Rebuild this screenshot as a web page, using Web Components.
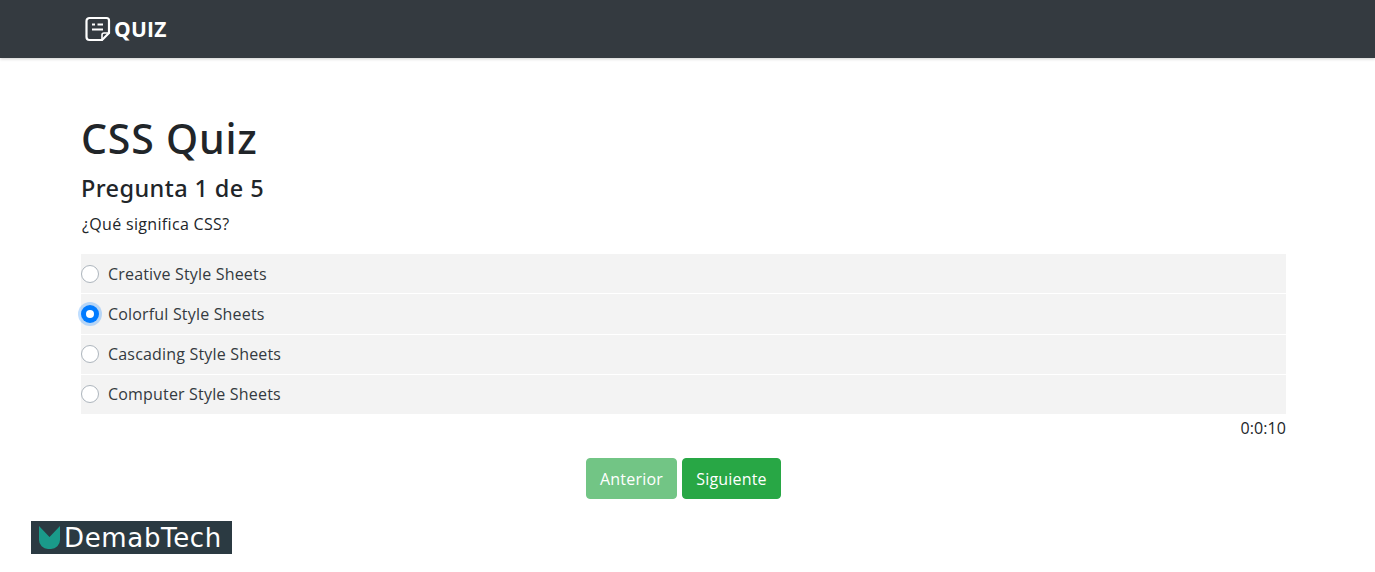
<!DOCTYPE html>
<html lang="es"><head><meta charset="utf-8"><title>Quiz</title>
<style>
html,body{margin:0;padding:0;background:#fff;height:572px;overflow:hidden}
body{font-family:"Open Sans","Noto Sans",sans-serif;color:#212529}
</style></head><body>
<quiz-nav></quiz-nav>
<quiz-app>
  <quiz-option>Creative Style Sheets</quiz-option>
  <quiz-option checked>Colorful Style Sheets</quiz-option>
  <quiz-option>Cascading Style Sheets</quiz-option>
  <quiz-option>Computer Style Sheets</quiz-option>
</quiz-app>
<demab-logo></demab-logo>
<script>
function def(name,html){customElements.define(name,class extends HTMLElement{constructor(){super();this.attachShadow({mode:'open'}).innerHTML=html}})}
def('quiz-nav',`<style>
:host{display:flex;align-items:center;height:58px;background:#343a40;padding-left:85px;box-shadow:0 1px 3px rgba(0,0,0,.2);gap:3px;box-sizing:border-box;color:#fff}
svg{display:block}
b{font:700 21px/1 "Open Sans",sans-serif;letter-spacing:.2px}
</style>
<svg width="26" height="26" viewBox="0 0 26 26" fill="none" stroke="#fff" stroke-width="2.200" stroke-linejoin="round" stroke-linecap="round"><path d="M4.500 2h17a2.500 2.500 0 0 1 2.500 2.500v12.500l-7 7h-12.500a3 3 0 0 1-3-3v-16a3 3 0 0 1 3-3z"/><path d="M24 17h-5a2 2 0 0 0-2 2v5" stroke-width="1.600"/><path d="M7 8.500h3M12.500 8.500h5.500M7 13.500h11" stroke-width="2" stroke-linecap="butt"/></svg><b>QUIZ</b>`);
def('quiz-app',`<style>
:host{display:block;padding:57px 89px 0 81px;font-family:"Noto Sans","Open Sans",sans-serif}
h1{margin:0;font-size:41px;line-height:47px;font-weight:500;letter-spacing:.8px;color:#212529}
h2{margin:12px 0 0;font-size:23.500px;line-height:29px;font-weight:500;letter-spacing:.4px;color:#212529}
p{margin:9px 0 0;padding-left:1px;font:16px/24px "Open Sans",sans-serif;letter-spacing:.33px;color:#212529}
.list{display:flex;flex-direction:column;gap:1px;margin-top:18px}
.t{text-align:right;font:16px/24px "Open Sans",sans-serif;letter-spacing:.1px;margin-top:2px}
.btns{display:flex;justify-content:center;gap:5px;margin:18px 0 0}
button{font:16px/24px "Open Sans",sans-serif;letter-spacing:.2px;color:#fff;border:1px solid #28a745;background:#28a745;border-radius:4px;height:41px;padding:0;box-sizing:border-box}
.a{width:91px;opacity:.65}.s{width:99px}
</style>
<h1>CSS Quiz</h1><h2>Pregunta 1 de 5</h2><p>¿Qué significa CSS?</p>
<div class="list"><slot></slot></div>
<div class="t">0:0:10</div>
<div class="btns"><button class="a">Anterior</button><button class="s">Siguiente</button></div>`);
customElements.define('quiz-option',class extends HTMLElement{constructor(){super();
const c=this.hasAttribute('checked');
this.attachShadow({mode:'open'}).innerHTML=`<style>
:host{display:flex;align-items:center;height:39.25px;background:#f3f3f3;font:16px/24px "Open Sans",sans-serif;letter-spacing:.18px;color:#343a40}
i{display:block;width:18px;height:18px;box-sizing:border-box;border-radius:50%;margin-right:9px;background:#fff;border:1px solid #adb5bd;flex:none}
i.c{background:#007bff;border:none;box-shadow:0 0 0 3px rgba(0,123,255,.25);position:relative}
i.c::after{content:"";position:absolute;left:5px;top:5px;width:8px;height:8px;border-radius:50%;background:#fff}
</style><i class="${c?'c':''}"></i><slot></slot>`}});
def('demab-logo',`<style>
:host{position:absolute;left:31px;top:521px;width:201px;height:33px;background:#2b3a42;display:flex;align-items:center;color:#fff;font:400 26px/1 "DejaVu Sans",sans-serif;letter-spacing:.65px;box-sizing:border-box;padding-left:8px;gap:4px}
svg{flex:none}
</style><svg width="21" height="23" viewBox="0 0 21 23"><path d="M0 0L10.500 11 21 0V14a9 9 0 0 1-9 9H9a9 9 0 0 1-9-9z" fill="#1a9a8a"/></svg><span>DemabTech</span>`);
</script>
</body></html>
